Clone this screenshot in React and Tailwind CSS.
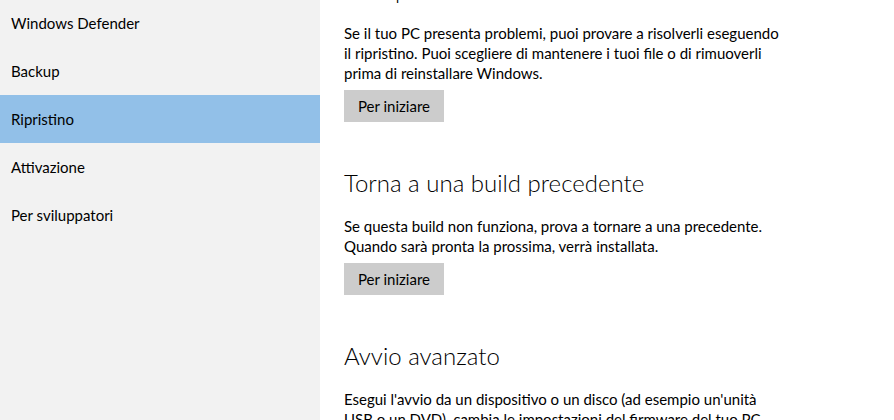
const menu = ["Windows Defender", "Backup", "Ripristino", "Attivazione", "Per sviluppatori"];

const sections = [
  {
    title: "Reimposta il PC",
    text: "Se il tuo PC presenta problemi, puoi provare a risolverli eseguendo il ripristino. Puoi scegliere di mantenere i tuoi file o di rimuoverli prima di reinstallare Windows.",
    button: "Per iniziare",
  },
  {
    title: "Torna a una build precedente",
    text: "Se questa build non funziona, prova a tornare a una precedente. Quando sarà pronta la prossima, verrà installata.",
    button: "Per iniziare",
  },
  {
    title: "Avvio avanzato",
    text: "Esegui l'avvio da un dispositivo o un disco (ad esempio un'unità USB o un DVD), cambia le impostazioni del firmware del tuo PC, cambia le impostazioni di avvio di Windows o ripristina Windows da un'immagine di sistema.",
    button: "Riavvia ora",
  },
];

export default function App() {
  return (
    <div
      className="flex w-[894px] h-[420px] overflow-hidden bg-white text-black"
      style={{ fontFamily: 'Lato, "Noto Sans", sans-serif' }}
    >
      <div className="w-[320px] shrink-0 bg-[#f2f2f2]">
        <div className="-mt-[1px]">
          {menu.map((m) => (
            <div
              key={m}
              className={`h-[48px] flex items-center pl-[11px] text-[15px] ${
                m === "Ripristino" ? "bg-[#92c0e8]" : ""
              }`}
            >
              {m}
            </div>
          ))}
        </div>
      </div>
      <div className="flex-1 pl-[24px]">
        <div className="-mt-[26px] flex flex-col w-[440px]">
          {sections.map((s) => (
            <div key={s.title} className="flex flex-col items-start mb-[45px]">
              <h2 className="text-[24px] leading-[32px] font-light mb-[17px]">{s.title}</h2>
              <p className="text-[15px] leading-[20px] mb-[7px]">{s.text}</p>
              <button className="h-[32px] px-[14px] bg-[#cccccc] text-[15px]">{s.button}</button>
            </div>
          ))}
        </div>
      </div>
    </div>
  );
}
